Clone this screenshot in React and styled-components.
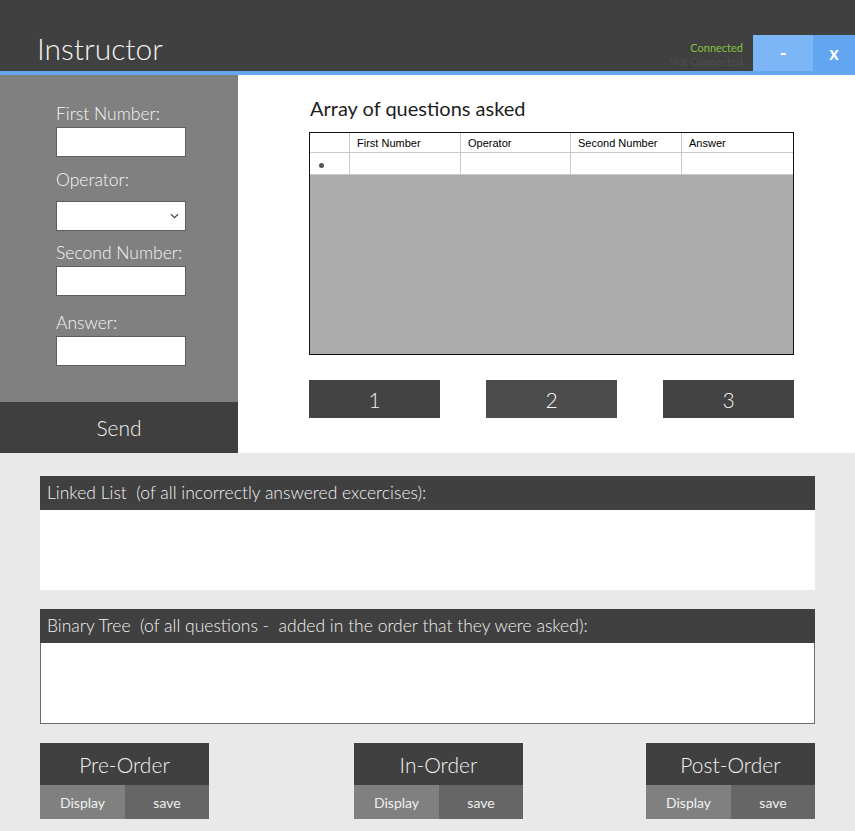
import React from "react";
import styled, { createGlobalStyle } from "styled-components";

const GlobalStyle = createGlobalStyle`
  body {
    margin: 0;
    background: #e9e9e9;
    font-family: "Lato", "Open Sans", sans-serif;
  }
`;

const Window = styled.div`
  width: 855px;
  height: 831px;
  display: flex;
  flex-direction: column;
  background: #e9e9e9;
  overflow: hidden;
`;

const TitleBar = styled.header`
  height: 71px;
  background: #404040;
  border-bottom: 4px solid #66a6ee;
  display: flex;
  align-items: flex-end;
  justify-content: space-between;
`;

const Title = styled.h1`
  margin: 0 0 5px 37px;
  font-weight: 300;
  font-size: 30px;
  line-height: 36px;
  color: #f2f2f2;
`;

const WindowControls = styled.div`
  display: flex;
  align-items: flex-end;
`;

const Status = styled.div`
  display: flex;
  flex-direction: column;
  align-items: flex-end;
  margin: 0 10px 2px 0;
  font-size: 11px;
  line-height: 14px;
`;

const StatusText = styled.span`
  color: ${(p) => (p.$on ? "#86c33f" : "#4d4d4d")};
`;

const CtrlButton = styled.button`
  width: ${(p) => p.$w}px;
  height: 36px;
  border: none;
  padding: 0;
  background: ${(p) => p.$bg};
  color: #ffffff;
  font-family: inherit;
  font-size: 18px;
  font-weight: 700;
  cursor: pointer;
`;

const Main = styled.div`
  height: 378px;
  display: flex;
`;

const SidePanel = styled.aside`
  width: 238px;
  background: #808080;
  display: flex;
  flex-direction: column;
`;

const Form = styled.div`
  padding: 29px 0 0 56px;
  display: flex;
  flex-direction: column;
`;

const Label = styled.label`
  margin-top: ${(p) => p.$top}px;
  margin-bottom: ${(p) => p.$gap}px;
  font-size: 17.5px;
  font-weight: 300;
  line-height: 20px;
  color: #f6f6f6;
`;

const TextBox = styled.div`
  width: 122px;
  height: 28px;
  background: #ffffff;
  border: 1px solid #5e5e5e;
  display: flex;
  align-items: center;
  justify-content: flex-end;
  padding-right: 6px;
`;

const SendButton = styled.button`
  margin-top: auto;
  height: 51px;
  border: none;
  background: #3f3f3f;
  color: #f2f2f2;
  font-family: inherit;
  font-size: 21px;
  font-weight: 300;
  cursor: pointer;
`;

const Content = styled.section`
  flex: 1;
  background: #ffffff;
  padding: 22px 0 0 71px;
`;

const Heading = styled.h2`
  margin: 0 0 13px 1px;
  font-weight: 400;
  font-size: 20px;
  line-height: 22px;
  color: #1e1e1e;
`;

const Grid = styled.div`
  width: 483px;
  height: 221px;
  border: 1px solid #111111;
  background: #ababab;
`;

const GridRow = styled.div`
  display: grid;
  grid-template-columns: 40px 111px 110px 111px 111px;
  height: ${(p) => p.$h}px;
  background: #ffffff;
`;

const GridCell = styled.div`
  border-right: 1px solid #c9c9c9;
  border-bottom: 1px solid #c9c9c9;
  font-family: "Liberation Sans", Arial, sans-serif;
  font-size: 11px;
  color: #000000;
  padding-left: ${(p) => (p.$marker ? 9 : 7)}px;
  padding-top: 1px;
  display: flex;
  align-items: center;
  &:last-child {
    border-right: none;
  }
`;

const Marker = styled.span`
  width: 5px;
  height: 5px;
  border-radius: 50%;
  background: #555555;
  margin-top: 3px;
`;

const NumberRow = styled.div`
  width: 485px;
  margin-top: 25px;
  display: flex;
  justify-content: space-between;
`;

const NumberButton = styled.button`
  width: 131px;
  height: 38px;
  border: none;
  background: ${(p) => (p.$light ? "#4c4c4c" : "#434343")};
  color: #f2f2f2;
  font-family: inherit;
  font-size: 21px;
  font-weight: 300;
  cursor: pointer;
`;

const Lower = styled.div`
  flex: 1;
  padding: 23px 40px 0;
  display: flex;
  flex-direction: column;
`;

const Box = styled.div`
  margin-bottom: 19px;
`;

const BoxHeader = styled.div`
  height: 34px;
  background: #404040;
  color: #f2f2f2;
  font-size: 17.5px;
  font-weight: 300;
  line-height: 33px;
  padding-left: 7px;
  white-space: pre;
`;

const BoxBody = styled.div`
  height: 80px;
  background: #ffffff;
  border: ${(p) => (p.$bordered ? "1px solid #6b6b6b" : "none")};
  border-top: none;
`;

const TreeRow = styled.div`
  display: flex;
`;

const TreeGroup = styled.div`
  width: 169px;
  margin-left: ${(p) => p.$offset}px;
  display: flex;
  flex-direction: column;
`;

const TreeTitle = styled.div`
  height: 42px;
  background: #404040;
  color: #f2f2f2;
  font-size: 21px;
  font-weight: 300;
  line-height: 44px;
  text-align: center;
`;

const TreeActions = styled.div`
  display: grid;
  grid-template-columns: 85px 84px;
  height: 34px;
`;

const TreeAction = styled.button`
  border: none;
  background: ${(p) => (p.$primary ? "#808080" : "#666666")};
  color: #f0f0f0;
  font-family: inherit;
  font-size: 14px;
  cursor: pointer;
`;

const Chevron = () => (
  <svg width="9" height="6" viewBox="0 0 9 6">
    <path d="M1 1.2 L4.5 4.6 L8 1.2" fill="none" stroke="#444" strokeWidth="1.2" />
  </svg>
);

const fields = [
  { label: "First Number:", top: 0, gap: 3 },
  { label: "Operator:", top: 13, gap: 11, select: true },
  { label: "Second Number:", top: 12, gap: 3 },
  { label: "Answer:", top: 17, gap: 3 },
];

const columns = ["First Number", "Operator", "Second Number", "Answer"];

const orders = [
  { name: "Pre-Order", offset: 0 },
  { name: "In-Order", offset: 145 },
  { name: "Post-Order", offset: 123 },
];

const App = () => {
  return (
    <Window>
      <GlobalStyle />
      <TitleBar>
        <Title>Instructor</Title>
        <WindowControls>
          <Status>
            <StatusText $on>Connected</StatusText>
            <StatusText>Not Connected</StatusText>
          </Status>
          <CtrlButton $w={60} $bg="#7db6f6">-</CtrlButton>
          <CtrlButton $w={42} $bg="#62a5f1">x</CtrlButton>
        </WindowControls>
      </TitleBar>

      <Main>
        <SidePanel>
          <Form>
            {fields.map((f) => (
              <React.Fragment key={f.label}>
                <Label $top={f.top} $gap={f.gap}>
                  {f.label}
                </Label>
                <TextBox>{f.select && <Chevron />}</TextBox>
              </React.Fragment>
            ))}
          </Form>
          <SendButton>Send</SendButton>
        </SidePanel>

        <Content>
          <Heading>Array of questions asked</Heading>
          <Grid>
            <GridRow $h={20}>
              <GridCell />
              {columns.map((c) => (
                <GridCell key={c}>{c}</GridCell>
              ))}
            </GridRow>
            <GridRow $h={22}>
              <GridCell $marker>
                <Marker />
              </GridCell>
              {columns.map((c) => (
                <GridCell key={c} />
              ))}
            </GridRow>
          </Grid>
          <NumberRow>
            <NumberButton>1</NumberButton>
            <NumberButton $light>2</NumberButton>
            <NumberButton>3</NumberButton>
          </NumberRow>
        </Content>
      </Main>

      <Lower>
        <Box>
          <BoxHeader>Linked List  (of all incorrectly answered excercises):</BoxHeader>
          <BoxBody />
        </Box>
        <Box>
          <BoxHeader>Binary Tree  (of all questions -  added in the order that they were asked):</BoxHeader>
          <BoxBody $bordered />
        </Box>
        <TreeRow>
          {orders.map((o) => (
            <TreeGroup key={o.name} $offset={o.offset}>
              <TreeTitle>{o.name}</TreeTitle>
              <TreeActions>
                <TreeAction $primary>Display</TreeAction>
                <TreeAction>save</TreeAction>
              </TreeActions>
            </TreeGroup>
          ))}
        </TreeRow>
      </Lower>
    </Window>
  );
};

export default App;
